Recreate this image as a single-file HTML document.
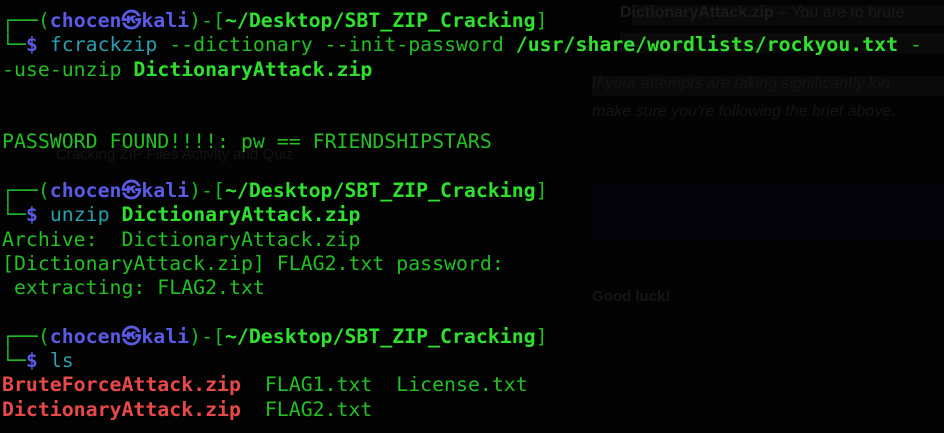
<!DOCTYPE html>
<html><head><meta charset="utf-8"><style>
html,body{margin:0;padding:0;background:#030303;width:944px;height:433px;overflow:hidden;position:relative}
.bg{position:absolute;font-family:"Liberation Sans",sans-serif;color:#161616}
pre{position:absolute;left:2px;top:9px;margin:0;font-family:"DejaVu Sans Mono",monospace;font-size:19.85px;line-height:24.3px;color:#22c022;white-space:pre}
.g{color:#1fb81f}
.b{color:#5a5ae6;font-weight:bold}
.p{color:#2fe02f;font-weight:bold}
.c{color:#2a9fae}
.r{color:#e84848;font-weight:bold}
</style></head><body>
<div class="bg" style="left:632px;top:5px;width:312px;height:20px;background:#0a0a0a"></div>
<div class="bg" style="left:620px;top:4px;font-size:16px;font-weight:bold;color:#1a1a1a">Dictionary​Attack.zip <span style="font-weight:normal">– You are to brute</span></div>
<div class="bg" style="left:620px;top:33px;width:324px;height:20px;background:#0a0a0a"></div>
<div class="bg" style="left:592px;top:76px;width:352px;height:20px;background:#0a0a0a"></div>
<div class="bg" style="left:592px;top:75px;font-size:16px;font-style:italic;color:#151515">If your attempts are taking significantly lon</div>
<div class="bg" style="left:592px;top:103px;font-size:16px;font-style:italic;color:#151515">make sure you're following the brief above.</div>
<div class="bg" style="left:592px;top:183px;width:352px;height:58px;background:#04040a"></div>
<div class="bg" style="left:592px;top:288px;font-size:15px;font-weight:bold;color:#161616">Good luck!</div>
<div class="bg" style="left:56px;top:146px;font-size:15px;color:#141414">Cracking ZIP Files Activity and Quiz</div>
<pre><span class="g">┌──(</span><span class="b">chocen㉿kali</span><span class="g">)-[</span><span class="p">~/Desktop/SBT_ZIP_Cracking</span><span class="g">]</span>
<span class="g">└─</span><span class="b">$</span> <span class="c">fcrackzip</span> --dictionary --init-password <span class="p">/usr/share/wordlists/rockyou.txt</span> -
-use-unzip <span class="p">DictionaryAttack.zip</span>


PASSWORD FOUND!!!!: pw == FRIENDSHIPSTARS

<span class="g">┌──(</span><span class="b">chocen㉿kali</span><span class="g">)-[</span><span class="p">~/Desktop/SBT_ZIP_Cracking</span><span class="g">]</span>
<span class="g">└─</span><span class="b">$</span> <span class="c">unzip</span> <span class="p">DictionaryAttack.zip</span>
Archive:  DictionaryAttack.zip
[DictionaryAttack.zip] FLAG2.txt password: 
 extracting: FLAG2.txt               

<span class="g">┌──(</span><span class="b">chocen㉿kali</span><span class="g">)-[</span><span class="p">~/Desktop/SBT_ZIP_Cracking</span><span class="g">]</span>
<span class="g">└─</span><span class="b">$</span> <span class="c">ls</span>
<span class="r">BruteForceAttack.zip</span>  FLAG1.txt  License.txt
<span class="r">DictionaryAttack.zip</span>  FLAG2.txt</pre>
</body></html>
